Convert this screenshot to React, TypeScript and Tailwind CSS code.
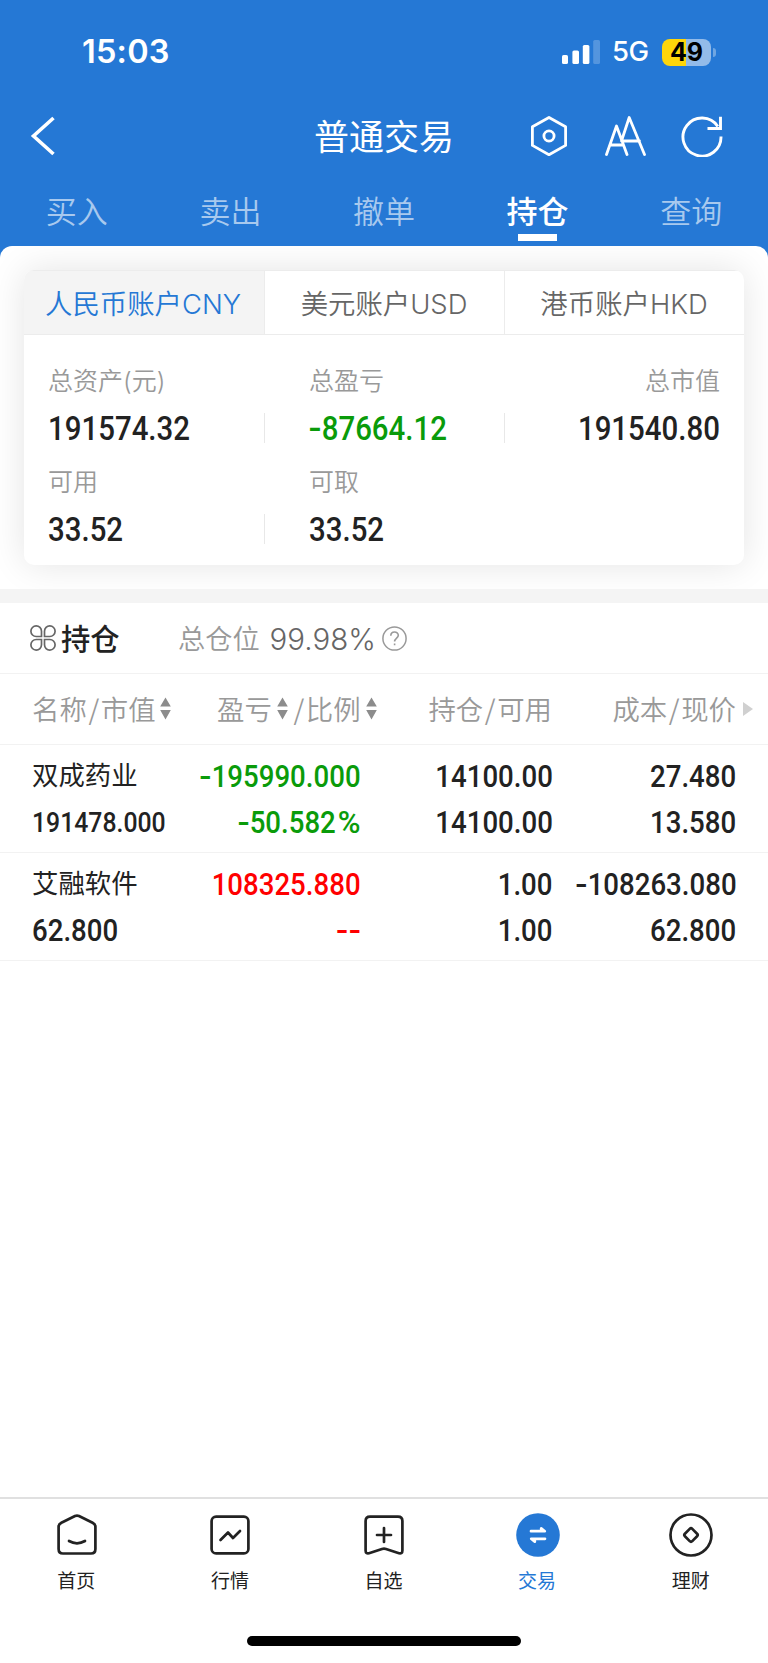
import React from "react";

const TABS = ["买入", "卖出", "撤单", "持仓", "查询"];
const ACCOUNTS = ["人民币账户CNY", "美元账户USD", "港币账户HKD"];

function StatusBar() {
  return (
    <div className="flex h-[102px] items-center justify-between pl-[82px] pr-[52px] pt-[2px]">
      <span className="font-['Inter'] text-[32.5px] font-semibold leading-none tracking-[0.2px]">15:03</span>
      <div className="flex items-center">
        <svg width="38" height="24" viewBox="0 0 38 24" fill="#fff">
          <rect x="0" y="15" width="6" height="9" rx="1.6" />
          <rect x="10.4" y="10.5" width="6.6" height="13.5" rx="1.6" />
          <rect x="20.8" y="5" width="6.6" height="19" rx="1.6" />
          <rect x="31.2" y="0" width="6.8" height="24" rx="1.6" opacity="0.22" />
        </svg>
        <span className="ml-[12px] w-[38px] whitespace-nowrap font-['Inter'] text-[27.5px] font-medium leading-none tracking-[-0.6px]">5G</span>
        <div className="ml-[12px] flex h-[27px] w-[49px] items-center justify-center rounded-[8px] bg-[linear-gradient(90deg,#ffd60a_24.5px,#93bbe9_24.5px)] font-['Inter'] text-[25px] font-bold leading-none text-black">
          49
        </div>
        <div className="ml-[2px] h-[9px] w-[3px] rounded-r-full bg-[#6fa6e2]" />
      </div>
    </div>
  );
}

function TitleBar() {
  return (
    <div className="grid h-[68px] grid-cols-[1fr_140px_1fr] items-center">
      <svg className="ml-[29px]" width="26" height="40" viewBox="0 0 26 40" fill="none" stroke="#fff" strokeWidth="3.6">
        <path d="M24.5 2 4.5 20 24.5 38" />
      </svg>
      <h1 className="whitespace-nowrap pt-[2px] text-center text-[35px] font-normal leading-none">普通交易</h1>
      <div className="flex items-center pl-[77px]">
        <svg width="36" height="40" viewBox="0 0 36 40" fill="none" stroke="#fff" strokeWidth="2.8" strokeLinejoin="round">
          <path d="M18 1.5 34.6 10.8V29.4L18 38.7 1.4 29.4V10.8Z" />
          <circle cx="18" cy="20" r="5.1" />
        </svg>
        <svg className="ml-[38px]" width="41" height="40" viewBox="0 0 41 40" fill="none" stroke="#fff" strokeWidth="2.8" strokeLinejoin="round" strokeLinecap="round">
          <path d="M1.5 38.5 11.5 10 22 38.5M5.5 29H18M34.5 25H16.5L24.2 1.5 39.5 38.5" />
        </svg>
        <svg className="ml-[35px]" width="42" height="42" viewBox="0 0 42 42" fill="none" stroke="#fff" strokeWidth="2.9">
          <path d="M40 21.5A19 19 0 1 1 36.8 11.5" />
          <path d="M39.5 1.8V13.5H26.5" />
        </svg>
      </div>
    </div>
  );
}

/* Figures use a narrow face with a wide minus and percent sign. */
function Figure({ text }: { text: string }) {
  return (
    <>
      {text.split("").map((c, i) => {
        if (c === "-") {
          return (
            <span key={i} className="inline-block w-[14px] text-center">
              <span className="inline-block origin-center scale-x-[1.3]">-</span>
            </span>
          );
        }
        if (c === "%") {
          return <span key={i} className="ml-[5px] inline-block origin-right scale-x-[1.12]">%</span>;
        }
        return c;
      })}
    </>
  );
}

function Stat({ label, value, tone = "", divider = true, right = false }: { label: string; value: string; tone?: string; divider?: boolean; right?: boolean }) {
  return (
    <div className="h-[101px]">
      <div className={"flex h-[32px] items-center whitespace-nowrap pt-[3px] text-[25px] font-[350] text-[#999] " + (right ? "justify-end" : "")}>{label}</div>
      <div className={"mt-[17px] flex h-[30px] items-center pt-[3px] " + (divider ? "-mr-px border-r border-[#e8e8e8] " : "") + (right ? "justify-end " : "") + tone}>
        <span className={"scale-x-[0.905] whitespace-nowrap font-['Roboto'] text-[32.5px] font-medium leading-none " + (right ? "origin-right" : "origin-left")}>
          <Figure text={value} />
        </span>
      </div>
    </div>
  );
}

function AccountCard() {
  return (
    <div className="mx-6 mt-6 h-[295px] overflow-hidden rounded-[10px] bg-white shadow-[0_0_36px_rgba(0,0,0,0.11)]">
      <div className="grid h-[65px] grid-cols-3 border-b border-t border-[#ececec]">
        {ACCOUNTS.map((a, i) => (
          <div
            key={a}
            className={
              "flex items-center justify-center whitespace-nowrap pt-[5px] text-[27.4px] font-[350] " +
              (i === 0 ? "-mr-px border-r border-[#ececec] bg-[#f4f4f4] pr-[2px] text-[#2578d5]" : i === 1 ? "-mr-px border-r border-[#ececec] text-[#666]" : "text-[#666]")
            }
          >
            {a}
          </div>
        ))}
      </div>
      <div className="grid grid-cols-3 pt-[29px]">
        <div className="pl-6"><Stat label="总资产(元)" value="191574.32" /></div>
        <div className="pl-[45px]"><Stat label="总盈亏" value="-87664.12" tone="text-[#0a9b0a]" /></div>
        <div className="pr-6"><Stat label="总市值" value="191540.80" divider={false} right /></div>
        <div className="pl-6"><Stat label="可用" value="33.52" /></div>
        <div className="pl-[45px]"><Stat label="可取" value="33.52" divider={false} /></div>
      </div>
    </div>
  );
}

function Sort() {
  return (
    <svg width="11" height="23" viewBox="0 0 11 23" fill="#8c8c8c">
      <path d="M5.5 0.5 10.8 9.5H0.2ZM5.5 22.5 10.8 13H0.2Z" />
    </svg>
  );
}

function Slash() {
  return <span className="w-[14px] -translate-y-[2px] text-center font-['Noto_Sans_CJK_SC',sans-serif]">/</span>;
}

function Num({ children, left = false, small = false }: { children: string; left?: boolean; small?: boolean }) {
  return (
    <span
      className={
        "block h-[45.5px] whitespace-nowrap font-['Roboto'] font-medium leading-[45.5px] " +
        (small ? "scale-x-[0.885] text-[28px] " : "scale-x-[0.905] text-[30.5px] ") +
        (left ? "origin-left" : "origin-right")
      }
    >
      <Figure text={children} />
    </span>
  );
}

type Holding = { name: string; value: string; pnl: string; ratio: string; tone: string; qty: string; avail: string; cost: string; price: string; small: boolean };

const HOLDINGS: Holding[] = [
  { name: "双成药业", value: "191478.000", pnl: "-195990.000", ratio: "-50.582%", tone: "text-[#0a9b0a]", qty: "14100.00", avail: "14100.00", cost: "27.480", price: "13.580", small: true },
  { name: "艾融软件", value: "62.800", pnl: "108325.880", ratio: "--", tone: "text-[#ff0000]", qty: "1.00", avail: "1.00", cost: "-108263.080", price: "62.800", small: false },
];

function HoldingRow({ h }: { h: Holding }) {
  return (
    <div className="flex h-[108px] border-b border-[#f2f2f2] pl-8 pt-[9px] text-right">
      <div className="w-[140px] text-left">
        <div className="h-[45.5px] whitespace-nowrap text-[26.4px] leading-[43px]">{h.name}</div>
        <Num left small={h.small}>{h.value}</Num>
      </div>
      <div className={"flex w-[189px] flex-col items-end " + h.tone}>
        <Num>{h.pnl}</Num>
        <Num>{h.ratio}</Num>
      </div>
      <div className="flex w-[192px] flex-col items-end">
        <Num>{h.qty}</Num>
        <Num>{h.avail}</Num>
      </div>
      <div className="flex w-[183.5px] flex-col items-end">
        <Num>{h.cost}</Num>
        <Num>{h.price}</Num>
      </div>
    </div>
  );
}

function Holdings() {
  return (
    <section>
      <div className="flex h-[71px] items-center border-b border-[#f2f2f2] pl-[30px]">
        <svg width="26" height="26" viewBox="0 0 26 26" fill="none" stroke="#666" strokeWidth="1.7">
          <path d="M11.5 11.5H6.3A5.3 5.3 0 1 1 11.5 6.2ZM14.5 11.5H19.7A5.3 5.3 0 1 0 14.5 6.2ZM11.5 14.5H6.3A5.3 5.3 0 1 0 11.5 19.8ZM14.5 14.5H19.7A5.3 5.3 0 1 1 14.5 19.8Z" />
        </svg>
        <span className="ml-[5px] w-[117px] pt-[3px] text-[29.3px] font-medium">持仓</span>
        <span className="pt-[4px] text-[27.2px] font-[350] text-[#999]">总仓位</span>
        <span className="ml-[10px] w-[106px] whitespace-nowrap pt-[2px] text-[29.5px] font-[350] text-[#666]">99.98%</span>
        <svg className="ml-[6px]" width="25" height="25" viewBox="0 0 25 25" fill="none" stroke="#999" strokeWidth="1.5">
          <circle cx="12.5" cy="12.5" r="11.6" />
          <path d="M8.8 9.7C8.8 4.6 16.3 4.9 16.3 9.3 16.3 12 12.6 12.2 12.6 15.6M12.6 17.5V19.3" strokeWidth="1.6" />
        </svg>
      </div>
      <div className="flex h-[71px] items-center whitespace-nowrap border-b border-[#f2f2f2] text-[27.4px] font-[350] text-[#999] [&_span]:pt-[4px]">
        <div className="flex w-[217px] items-center pl-8"><span>名称</span><Slash /><span className="mr-[4px]">市值</span><Sort /></div>
        <div className="flex w-[176px] items-center"><span className="mr-[5px]">盈亏</span><Sort /><span className="w-[4px]" /><Slash /><span className="mr-[5px]">比例</span><Sort /></div>
        <div className="flex w-[159px] items-center justify-end"><span>持仓</span><Slash /><span>可用</span></div>
        <div className="flex w-[201px] items-center justify-end">
          <span>成本</span><Slash /><span className="mr-[7px]">现价</span>
          <svg width="10" height="14" viewBox="0 0 10 14" fill="#d0d0d0"><path d="M0 0 10 7 0 14Z" /></svg>
        </div>
      </div>
      {HOLDINGS.map((h) => <HoldingRow key={h.name} h={h} />)}
    </section>
  );
}

const NAV = [
  {
    label: "首页",
    icon: <g><path d="M20 3Q22 2.1 24 3L37.6 9.7Q40.4 11.2 40.4 13.5V36Q40.4 40.5 36 40.5H8Q3.6 40.5 3.6 36V13.5Q3.6 11.2 6.4 9.7Z" /><path d="M14 28Q22 32.6 30 28" /></g>,
  },
  {
    label: "行情",
    icon: <g><rect x="3.6" y="3.6" width="36.8" height="36.8" rx="4.5" /><path d="M12.5 27 20 19.5 25 25 32 18" /></g>,
  },
  {
    label: "自选",
    icon: <g><path d="M8 3.6H36Q40.4 3.6 40.4 8V37.5Q40.4 41 37 40.3L24 36Q22 35.3 20 36L7 40.3Q3.6 41 3.6 37.5V8Q3.6 3.6 8 3.6Z" /><path d="M22 15V29M15 22H29" /></g>,
  },
  {
    label: "交易",
    icon: <g><circle cx="22" cy="22" r="21.8" fill="#2578d5" stroke="none" /><path d="M15 18.2H28.8L25.2 15.4V18.2M29 25.8H15.2L18.8 28.6V25.8" stroke="#fff" fill="#fff" strokeWidth="2.7" /></g>,
  },
  {
    label: "理财",
    icon: <g><circle cx="22" cy="22" r="20.5" /><rect x="16.8" y="16.8" width="10.4" height="10.4" rx="1.8" transform="rotate(45 22 22)" /></g>,
  },
];

function BottomNav() {
  return (
    <nav className="flex h-[166px] flex-col items-center border-t-2 border-[#e0e0e0] bg-white">
      <div className="grid h-[137px] w-full grid-cols-5 pt-[14px]">
        {NAV.map((n, i) => (
          <div key={n.label} className={"flex flex-col items-center " + (i === 3 ? "text-[#2578d5]" : "text-[#222]")}>
            <svg width="44" height="44" viewBox="0 0 44 44" fill="none" stroke="currentColor" strokeWidth="2.7" strokeLinecap="round" strokeLinejoin="round">
              {n.icon}
            </svg>
            <span className="mt-[15px] pr-[1px] text-[19px] leading-[20px]">{n.label}</span>
          </div>
        ))}
      </div>
      <div className="h-[10px] w-[274px] rounded-full bg-black" />
    </nav>
  );
}

export default function App() {
  return (
    <div className="flex h-[1663px] w-[768px] flex-col overflow-hidden bg-[#2578d5] font-['Inter','Noto_Sans_CJK_SC',sans-serif] text-[#222]">
      <header className="h-[246px] text-white">
        <StatusBar />
        <TitleBar />
        <div className="grid h-[76px] grid-cols-5 pt-[22px]">
          {TABS.map((t, i) => (
            <div key={t} className={"flex flex-col items-center text-[31px] leading-[40px] " + (i === 3 ? "font-medium" : "font-[350] text-[#a8c9ee]")}>
              {t}
              {i === 3 && <span className="mt-[2px] h-[6.5px] w-[39px] bg-white" />}
            </div>
          ))}
        </div>
      </header>
      <main className="flex flex-1 flex-col overflow-hidden rounded-t-[12px] bg-white">
        <div className="h-[343px] shrink-0 overflow-hidden pb-6">
          <AccountCard />
        </div>
        <div className="h-[14px] shrink-0 bg-[#f4f4f4]" />
        <Holdings />
        <div className="flex-1" />
        <BottomNav />
      </main>
    </div>
  );
}
